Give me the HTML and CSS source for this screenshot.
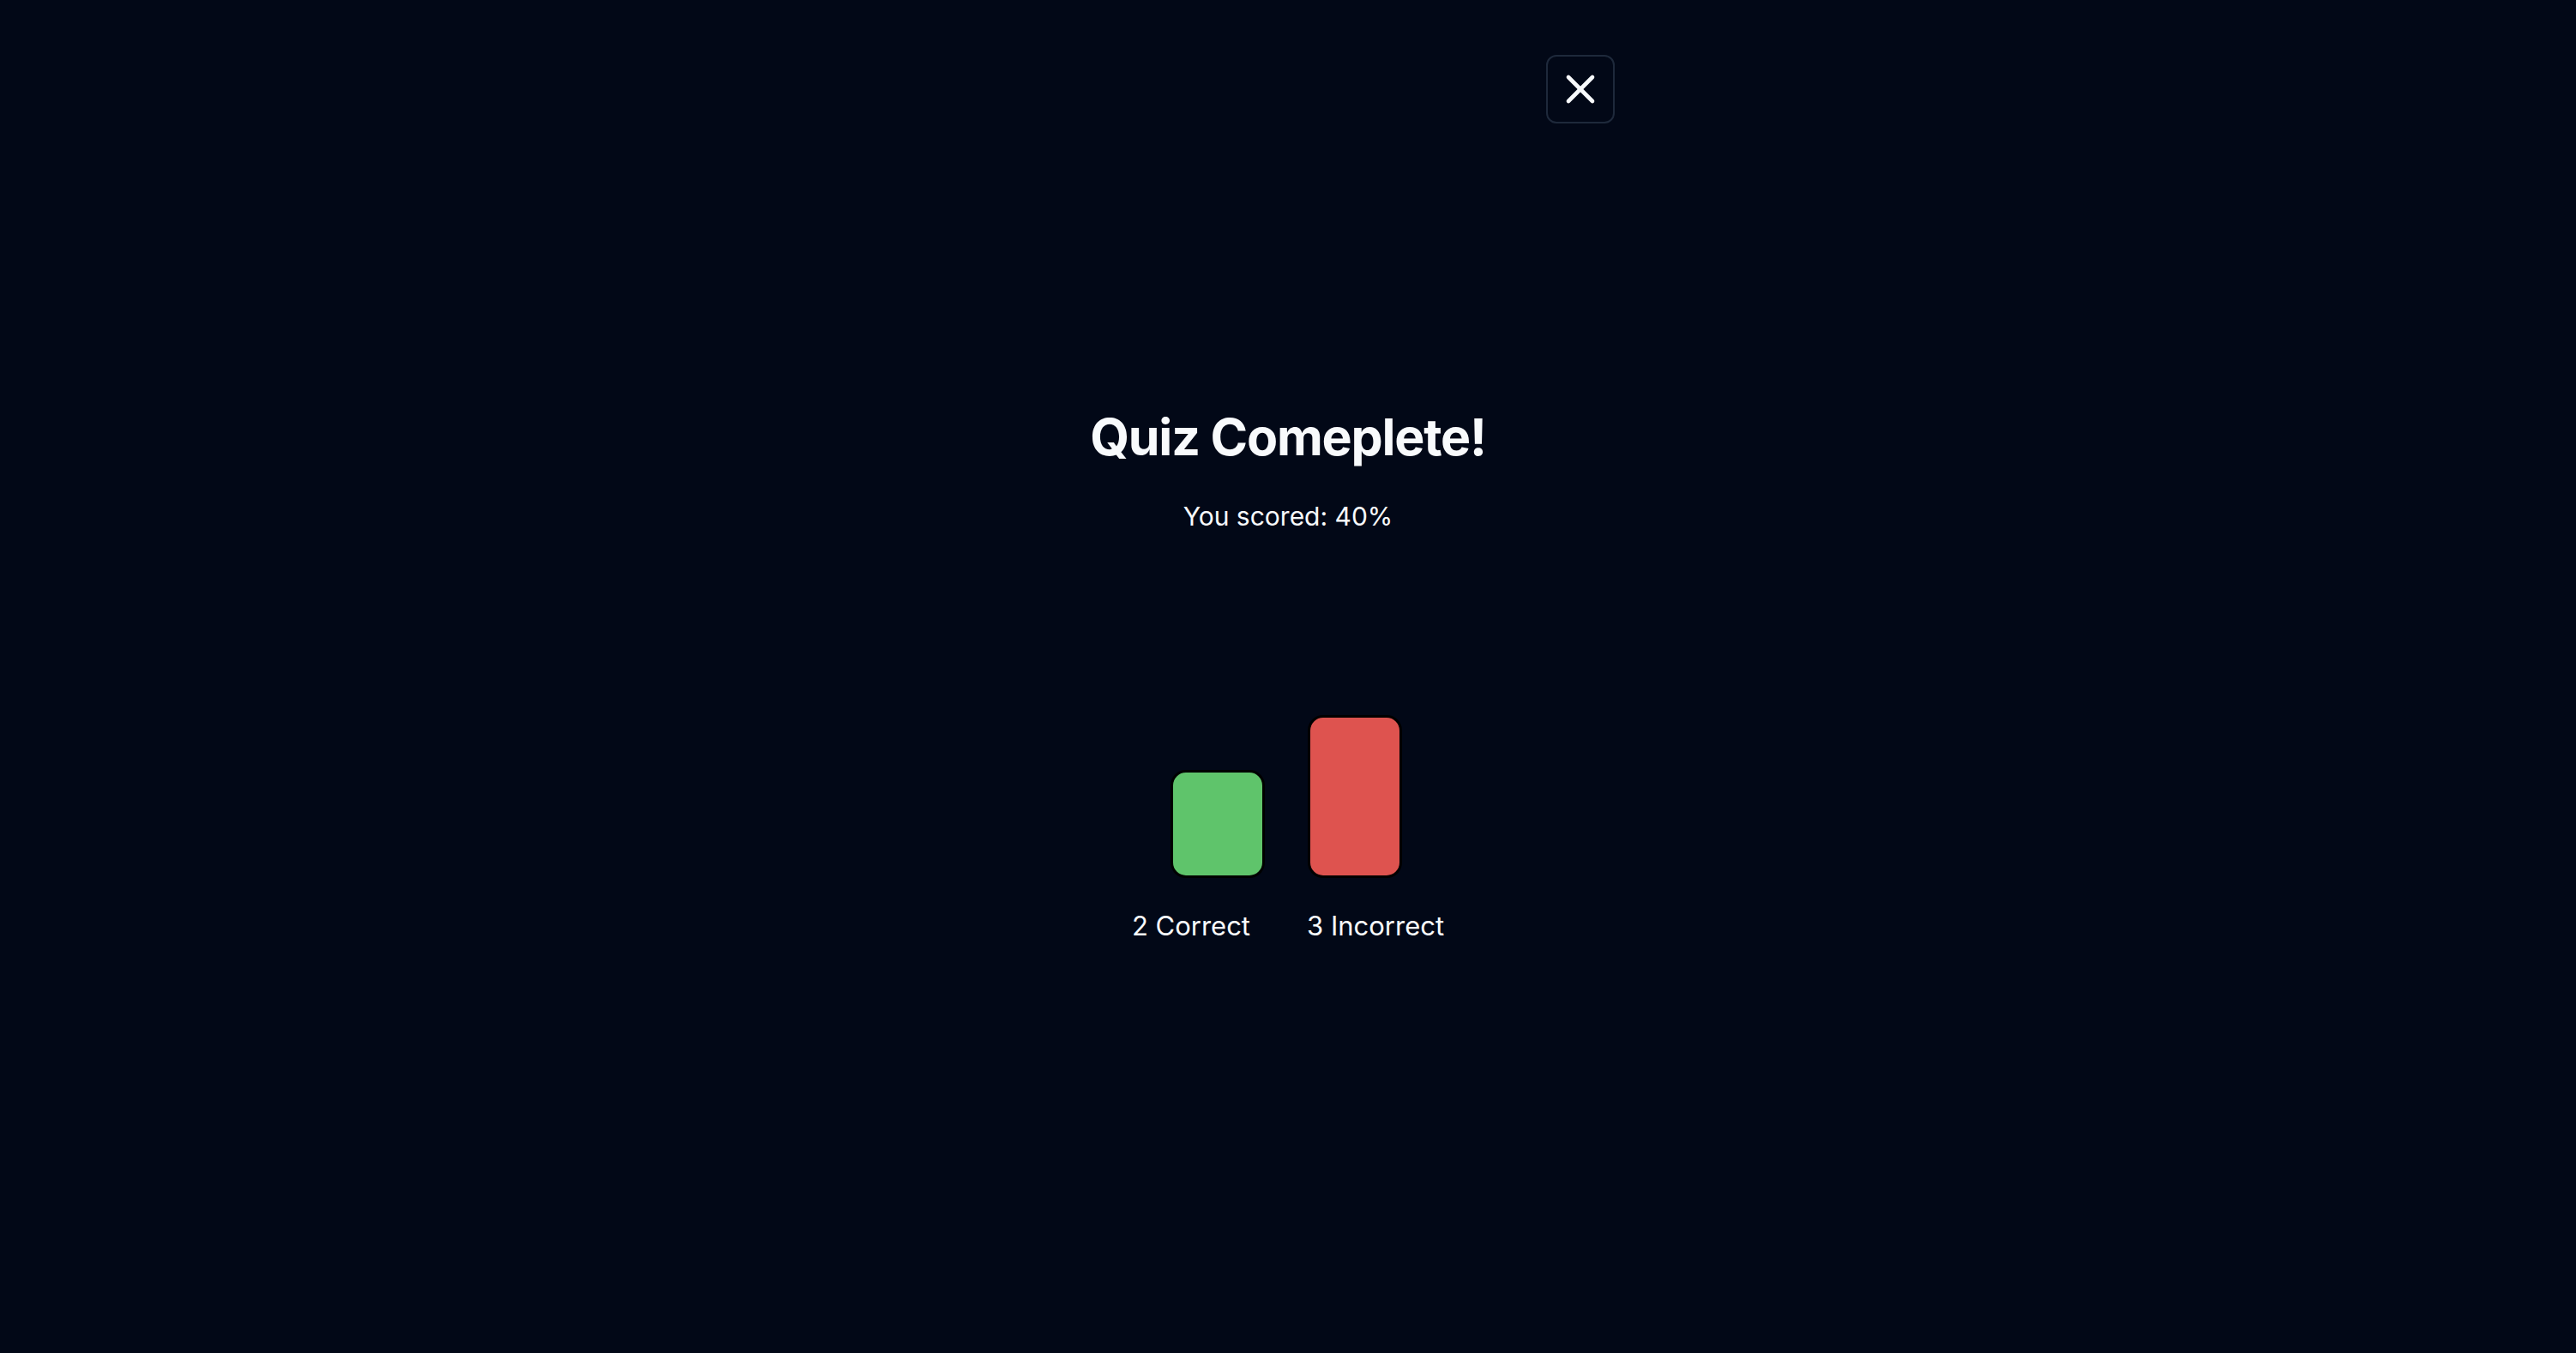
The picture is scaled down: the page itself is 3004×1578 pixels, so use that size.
FILE: index.html
```html
<!DOCTYPE html>
<html lang="en">
<head>
<meta charset="utf-8">
<title>Quiz Complete</title>
<link rel="stylesheet" href="styles.css">
</head>
<body>
<div class="page">
  <header class="topbar">
    <button class="close-btn" aria-label="Close">
      <svg viewBox="0 0 24 24" width="56" height="56" fill="none" stroke="currentColor" stroke-width="2" stroke-linecap="round" stroke-linejoin="round"><path d="M18 6 6 18"/><path d="m6 6 12 12"/></svg>
    </button>
  </header>
  <main class="result">
    <h1 class="title">Quiz Comeplete!</h1>
    <p class="score">You scored: 40%</p>
    <div class="chart">
      <div class="bar bar-correct"></div>
      <div class="bar bar-incorrect"></div>
    </div>
    <div class="labels">
      <span class="label">2 Correct</span>
      <span class="label">3 Incorrect</span>
    </div>
  </main>
</div>
</body>
</html>
```

FILE: styles.css
```css
* { box-sizing: border-box; }
html, body {
  margin: 0;
  padding: 0;
  background: #020817;
  color: #f8fafc;
  font-family: Inter, "Noto Sans", sans-serif;
}
.page {
  min-height: 1578px;
  display: flex;
  flex-direction: column;
  align-items: center;
}
.topbar {
  width: 762px;
  padding-top: 64px;
  display: flex;
  justify-content: flex-end;
}
.close-btn {
  width: 80px;
  height: 80px;
  border: 2px solid #1e293b;
  border-radius: 12px;
  background: transparent;
  color: #f8fafc;
  display: flex;
  align-items: center;
  justify-content: center;
  padding: 0;
}
.result {
  margin-top: 330px;
  display: flex;
  flex-direction: column;
  align-items: center;
}
.title {
  margin: 0;
  font-size: 59px;
  line-height: 72px;
  font-weight: 700;
  letter-spacing: -1.2px;
}
.score {
  margin: 32px 0 0;
  font-size: 30px;
  line-height: 48px;
}
.chart {
  margin-top: 208px;
  margin-right: 4px;
  display: flex;
  align-items: flex-end;
  gap: 50px;
}
.bar {
  width: 110px;
  border: 3px solid #000;
  border-radius: 18px;
}
.bar-correct {
  height: 126px;
  background: #5fc46b;
}
.bar-incorrect {
  height: 190px;
  background: #de534f;
}
.labels {
  margin-top: 32px;
  display: flex;
  gap: 66px;
  font-size: 31px;
  line-height: 48px;
}
```
